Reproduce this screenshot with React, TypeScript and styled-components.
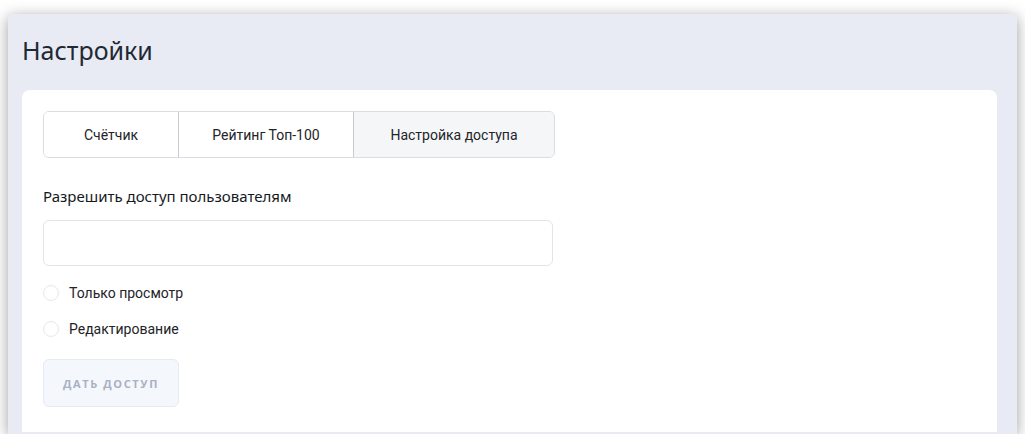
import React from "react"
import styled, { createGlobalStyle } from "styled-components"

const GlobalStyle = createGlobalStyle`
  html, body {
    margin: 0;
    padding: 0;
    background: #ffffff;
  }
  body {
    padding: 14px 8px 0 8px;
    font-family: Roboto, "Noto Sans", sans-serif;
  }
`

const tabs = ["Счётчик", "Рейтинг Топ-100", "Настройка доступа"]
const tabWidths = [134, 175, 201]

const App = () => {
  return (
    <>
      <GlobalStyle />
      <Frame>
        <Title>Настройки</Title>
        <Card>
          <Tabs>
            {tabs.map((t, i) => (
              <Tab key={t} $active={i === 2} $w={tabWidths[i]}>
                {t}
              </Tab>
            ))}
          </Tabs>
          <Label>Разрешить доступ пользователям</Label>
          <Input />
          <Radios>
            <RadioRow>
              <Circle />
              <RadioText>Только просмотр</RadioText>
            </RadioRow>
            <RadioRow>
              <Circle />
              <RadioText>Редактирование</RadioText>
            </RadioRow>
          </Radios>
          <Button>Дать доступ</Button>
        </Card>
      </Frame>
    </>
  )
}

export default App

const Frame = styled.div`
  height: 420px;
  background: #e8ebf3;
  box-shadow: 0 3px 14px rgba(0, 0, 0, 0.38);
  padding: 0 20px 2px 14px;
  box-sizing: border-box;
  display: flex;
  flex-direction: column;
`

const Title = styled.h1`
  margin: 0;
  padding: 19px 0 0 0;
  height: 76px;
  box-sizing: border-box;
  font-family: "Noto Sans", sans-serif;
  font-size: 25px;
  line-height: 34px;
  font-weight: 400;
  color: #1f2933;
`

const Card = styled.div`
  flex: 1;
  background: #ffffff;
  border-radius: 8px 8px 0 0;
  padding: 21px 21px 0 21px;
  display: flex;
  flex-direction: column;
  align-items: flex-start;
`

const Tabs = styled.div`
  display: flex;
  height: 47px;
  border: 1px solid #d9dce1;
  border-radius: 6px;
  overflow: hidden;
  box-sizing: border-box;
`

const Tab = styled.div<{ $active?: boolean; $w: number }>`
  width: ${(p) => p.$w}px;
  display: flex;
  align-items: center;
  justify-content: center;
  font-family: Roboto, sans-serif;
  font-size: 14px;
  color: #222428;
  background: ${(p) => (p.$active ? "#f5f6f8" : "#ffffff")};
  box-sizing: border-box;

  & + & {
    border-left: 1px solid ${(p) => (p.$active ? "#c7cace" : "#d9dce1")};
  }
`

const Label = styled.div`
  margin-top: 28px;
  font-family: "Noto Sans", sans-serif;
  font-size: 15px;
  line-height: 20px;
  font-weight: 400;
  color: #15191d;
`

const Input = styled.div`
  margin-top: 14px;
  width: 510px;
  height: 46px;
  border: 1px solid #e2e4e9;
  border-radius: 6px;
  box-sizing: border-box;
`

const Radios = styled.div`
  margin-top: 19px;
  display: flex;
  flex-direction: column;
  gap: 20px;
`

const RadioRow = styled.div`
  display: flex;
  align-items: center;
  gap: 10px;
  height: 16px;
`

const Circle = styled.span`
  width: 16px;
  height: 16px;
  border: 1px solid #e6e8ec;
  border-radius: 50%;
  box-sizing: border-box;
  background: #ffffff;
`

const RadioText = styled.span`
  font-family: Roboto, sans-serif;
  font-size: 14px;
  color: #222428;
`

const Button = styled.button`
  margin-top: 22px;
  width: 136px;
  height: 48px;
  background: #f4f7fc;
  border: 1px solid #e5eaf3;
  border-radius: 6px;
  font-family: "Open Sans", sans-serif;
  font-weight: 700;
  font-size: 11px;
  letter-spacing: 1.6px;
  text-transform: uppercase;
  color: #a9b1c2;
  padding: 0;
`
